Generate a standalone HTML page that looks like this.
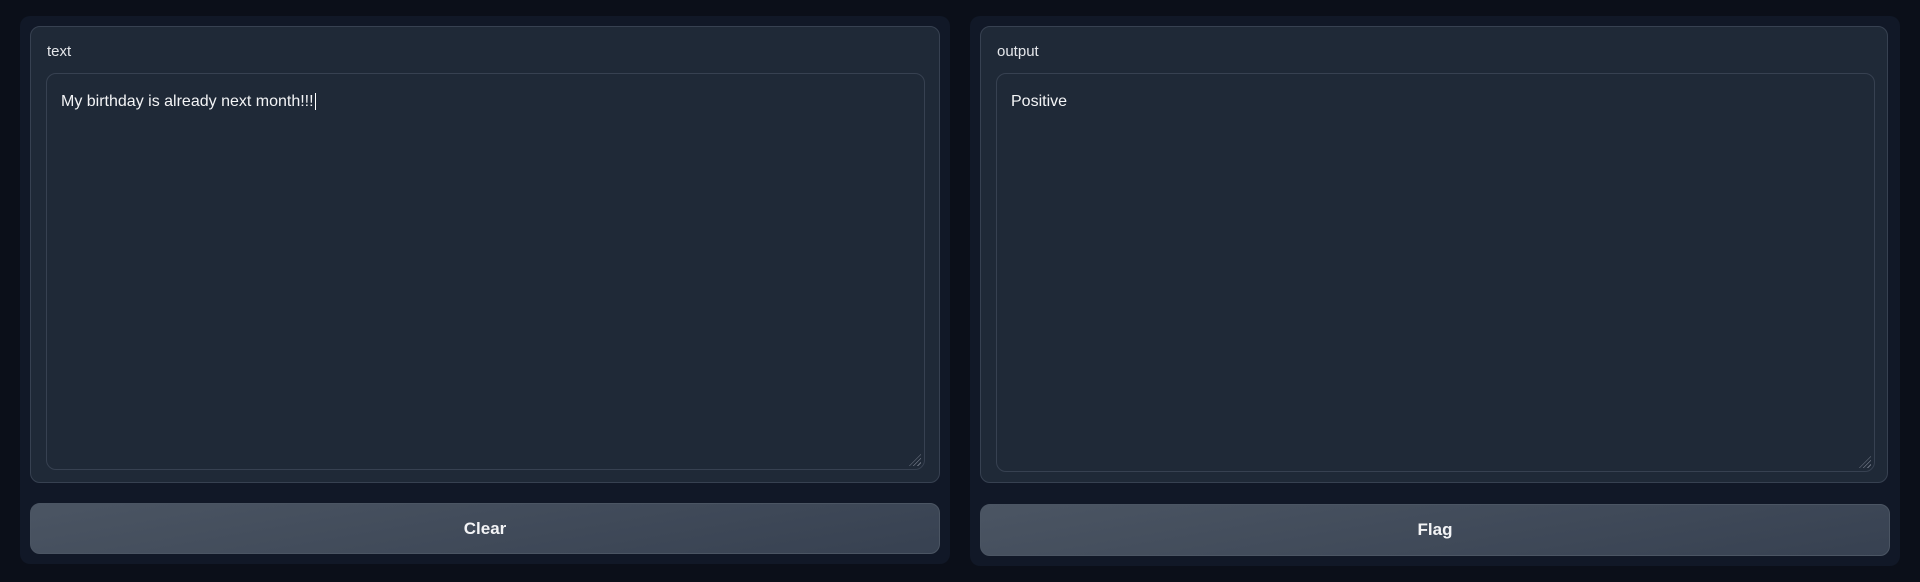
<!DOCTYPE html>
<html><head><style>
body{margin:0;width:1920px;height:582px;background:#0b0f19;font-family:"Liberation Sans",sans-serif;position:relative;overflow:hidden}
.panel{position:absolute;top:16px;width:930px;height:548px;background:#111827;border-radius:10px}
.block{position:absolute;left:10px;top:10px;width:910px;height:457px;background:#1f2937;border:1px solid #374151;border-radius:10px;box-sizing:border-box}
.lbl{position:absolute;left:16px;top:16px;font-size:15px;color:#e5e7eb}
.ta{position:absolute;left:15px;top:46px;width:879px;height:397px;border:1px solid #374151;border-radius:10px;box-sizing:border-box;color:#f3f4f6;font-size:16px;padding:19px 14px}
.btn{position:absolute;left:10px;width:910px;height:51px;border-radius:10px;background:linear-gradient(170deg,#4b5563,#374151);border:1px solid #4b5563;box-sizing:border-box;color:#f3f4f6;font-weight:bold;font-size:17px;text-align:center;line-height:49px}
.grip{position:absolute;right:3px;bottom:3px;width:12px;height:12px;background:repeating-linear-gradient(135deg,transparent 0 2px,#6b7280 2px 3px);clip-path:polygon(100% 0,100% 100%,0 100%)}
</style></head><body>
<div class="panel" style="left:20px">
 <div class="block"><div class="lbl">text</div><div class="ta">My birthday is already next month!!!<span style="border-left:1px solid #fff;margin-left:1px"></span><div class="grip"></div></div></div>
 <div class="btn" style="top:487px">Clear</div>
</div>
<div class="panel" style="left:970px;height:550px">
 <div class="block" style="width:908px"><div class="lbl">output</div><div class="ta" style="height:399px">Positive<div class="grip"></div></div></div>
 <div class="btn" style="top:488px;height:52px">Flag</div>
</div>
</body></html>
